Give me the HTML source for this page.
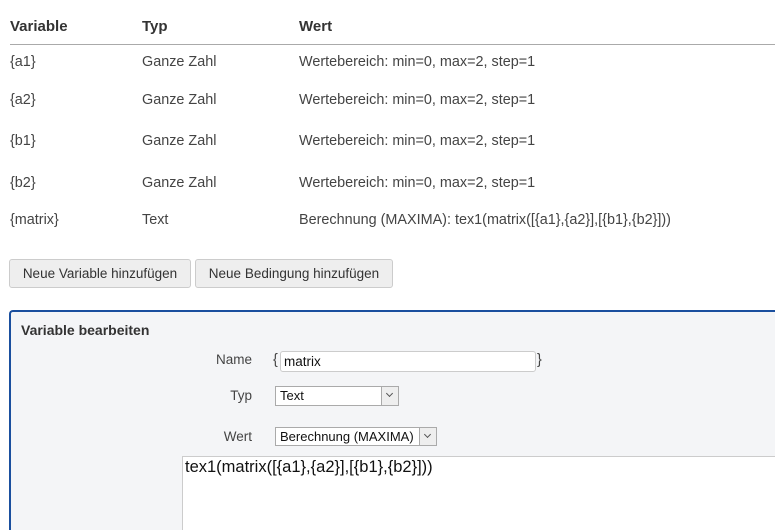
<!DOCTYPE html><html><head><style>
html,body{margin:0;width:775px;height:530px;overflow:hidden}
body{background:#fff;font-family:"Liberation Sans",sans-serif;font-size:14.4px;color:#444;position:relative}
.a{position:absolute;white-space:nowrap}
.h{font-weight:bold;color:#333;font-size:15px}
.btn{position:absolute;top:259px;height:27px;border:1px solid #ccc;border-radius:3px;background:#eee;line-height:27px;text-align:center;color:#333;font-size:13.5px}
.sel{position:absolute;height:18px;border:1px solid #aaa;background:#fff;line-height:18px;padding-left:4px;box-sizing:border-box;color:#111;font-size:13px}
.sel i{position:absolute;right:0;top:0;width:16px;height:16px;border-left:1px solid #aaa;background:#eee}
.sel i:after{content:"";position:absolute;left:5px;top:4px;width:4px;height:4px;border-right:1px solid #555;border-bottom:1px solid #555;transform:rotate(45deg)}
.lab{position:absolute;width:80px;text-align:right;color:#444;font-size:13.5px}
</style></head><body>
<div class="a h" style="left:10px;top:18px">Variable</div>
<div class="a h" style="left:142px;top:18px">Typ</div>
<div class="a h" style="left:299px;top:18px">Wert</div>
<div class="a" style="left:10px;top:44px;width:765px;height:1px;background:#aaa"></div>
<div class="a" style="left:10px;top:54px">{a1}</div><div class="a" style="left:142px;top:54px">Ganze Zahl</div><div class="a" style="left:299px;top:54px">Wertebereich: min=0, max=2, step=1</div>
<div class="a" style="left:10px;top:92px">{a2}</div><div class="a" style="left:142px;top:92px">Ganze Zahl</div><div class="a" style="left:299px;top:92px">Wertebereich: min=0, max=2, step=1</div>
<div class="a" style="left:10px;top:133px">{b1}</div><div class="a" style="left:142px;top:133px">Ganze Zahl</div><div class="a" style="left:299px;top:133px">Wertebereich: min=0, max=2, step=1</div>
<div class="a" style="left:10px;top:175px">{b2}</div><div class="a" style="left:142px;top:175px">Ganze Zahl</div><div class="a" style="left:299px;top:175px">Wertebereich: min=0, max=2, step=1</div>
<div class="a" style="left:10px;top:212px">{matrix}</div><div class="a" style="left:142px;top:212px">Text</div><div class="a" style="left:299px;top:212px">Berechnung (MAXIMA): tex1(matrix([{a1},{a2}],[{b1},{b2}]))</div>
<div class="btn" style="left:9px;width:180px">Neue Variable hinzufügen</div>
<div class="btn" style="left:195px;width:196px">Neue Bedingung hinzufügen</div>
<div class="a" style="left:9px;top:310px;width:766px;height:220px;border:2px solid #1a4f9e;border-right:none;border-bottom:none;border-radius:4px 0 0 0;background:#f4f5f7;box-sizing:border-box"></div>
<div class="a h" style="left:21px;top:322px;font-size:14px">Variable bearbeiten</div>
<div class="lab" style="left:172px;top:352px">Name</div>
<div class="a" style="left:273px;top:352px">{</div>
<div class="a" style="left:280px;top:351px;width:256px;height:21px;border:1px solid #ccc;border-radius:3px;background:#fff;box-sizing:border-box;line-height:19px;padding-left:3px;color:#111;font-size:13.5px">matrix</div>
<div class="a" style="left:537px;top:352px">}</div>
<div class="lab" style="left:172px;top:388px">Typ</div>
<div class="sel" style="left:275px;top:386px;width:124px;height:20px">Text<i style="height:18px"></i></div>
<div class="lab" style="left:172px;top:429px">Wert</div>
<div class="sel" style="left:275px;top:427px;width:162px;height:19px">Berechnung (MAXIMA)<i style="height:17px"></i></div>
<div class="a" style="left:182px;top:456px;width:593px;height:74px;border:1px solid #ccc;border-right:none;border-bottom:none;background:#fff;box-sizing:border-box;padding:1px 2px;font-size:16.5px;color:#111">tex1(matrix([{a1},{a2}],[{b1},{b2}]))</div>
</body></html>
